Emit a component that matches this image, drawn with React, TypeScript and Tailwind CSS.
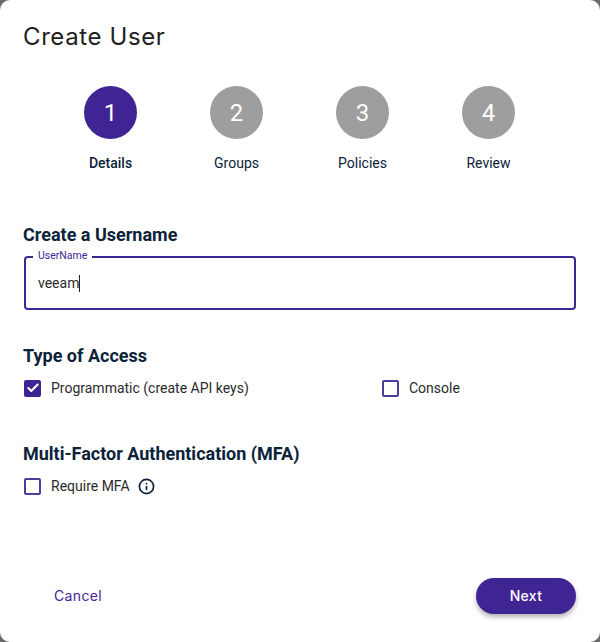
import React from "react";
import { Check, Info } from "lucide-react";

const steps = ["Details", "Groups", "Policies", "Review"];

function CheckItem({ label, checked }: { label: string; checked?: boolean }) {
  return (
    <label className="flex items-center gap-[10px] text-[14px] leading-[18px] text-[#2b2b2b]">
      <span
        className={
          checked
            ? "flex h-[17px] w-[17px] items-center justify-center rounded-[2px] bg-[#3f2594]"
            : "h-[17px] w-[17px] rounded-[2px] border-2 border-[#4f3a9e]"
        }
      >
        {checked && <Check size={14} strokeWidth={3.5} className="text-white" />}
      </span>
      <span>{label}</span>
    </label>
  );
}

export default function App() {
  return (
    <div className="h-[642px] w-[600px] bg-[#6b6b6b] font-['Roboto',sans-serif]">
      <div className="flex h-full flex-col rounded-[10px] bg-white px-6">
        <h1 className="mt-[21px] -ml-px font-['Inter',sans-serif] text-[24px] leading-[32px] tracking-[0.6px] text-[#212121]">
          Create User
        </h1>

        <div className="mt-[33px] ml-[23.5px] grid w-[504px] grid-cols-4">
          {steps.map((step, i) => (
            <div key={step} className="flex flex-col items-center">
              <div
                className={
                  "flex h-[53px] w-[53px] items-center justify-center rounded-full text-[24px] text-white " +
                  (i === 0 ? "bg-[#3f2594]" : "bg-[#9e9e9e]")
                }
              >
                {i + 1}
              </div>
              <div
                className={
                  "mt-[15px] text-[14px] leading-[18px] text-[#0b2239] " +
                  (i === 0 ? "font-medium" : "")
                }
              >
                {step}
              </div>
            </div>
          ))}
        </div>

        <h2 className="mt-[51px] -ml-px text-[18px] leading-[24px] font-bold text-[#0b2239]">
          Create a Username
        </h2>
        <div className="relative mt-[9px] flex h-[54px] items-center rounded-[4px] border-2 border-[#3f2594] px-[12px] text-[14px] text-[#2b2b2b]">
          <span className="absolute top-[-9px] left-[7px] bg-white px-[5px] text-[10.5px] leading-[14px] text-[#3f2594]">
            UserName
          </span>
          <span>veeam</span>
          <span className="h-[17px] w-px bg-[#212121]" />
        </div>

        <h2 className="mt-[34px] -ml-px text-[18px] leading-[24px] font-bold text-[#0b2239]">
          Type of Access
        </h2>
        <div className="mt-[11px] grid grid-cols-[358px_1fr]">
          <CheckItem label="Programmatic (create API keys)" checked />
          <CheckItem label="Console" />
        </div>

        <h2 className="mt-[45px] -ml-px text-[18px] leading-[24px] font-bold text-[#0b2239]">
          Multi-Factor Authentication (MFA)
        </h2>
        <div className="mt-[11px] flex items-center gap-[8px]">
          <CheckItem label="Require MFA" />
          <Info size={17} strokeWidth={2.4} className="text-[#0b2239]" />
        </div>

        <div className="mt-auto mb-[28px] flex items-center justify-between">
          <button className="ml-[30px] pb-[1px] font-['Inter',sans-serif] text-[14px] tracking-[0.35px] text-[#3f2594]">
            Cancel
          </button>
          <button className="h-[36px] w-[100px] rounded-full bg-[#3f2594] pb-[1px] font-['Inter',sans-serif] text-[14px] font-medium tracking-[0.3px] text-white shadow-[0_3px_5px_rgba(0,0,0,0.3)]">
            Next
          </button>
        </div>
      </div>
    </div>
  );
}
